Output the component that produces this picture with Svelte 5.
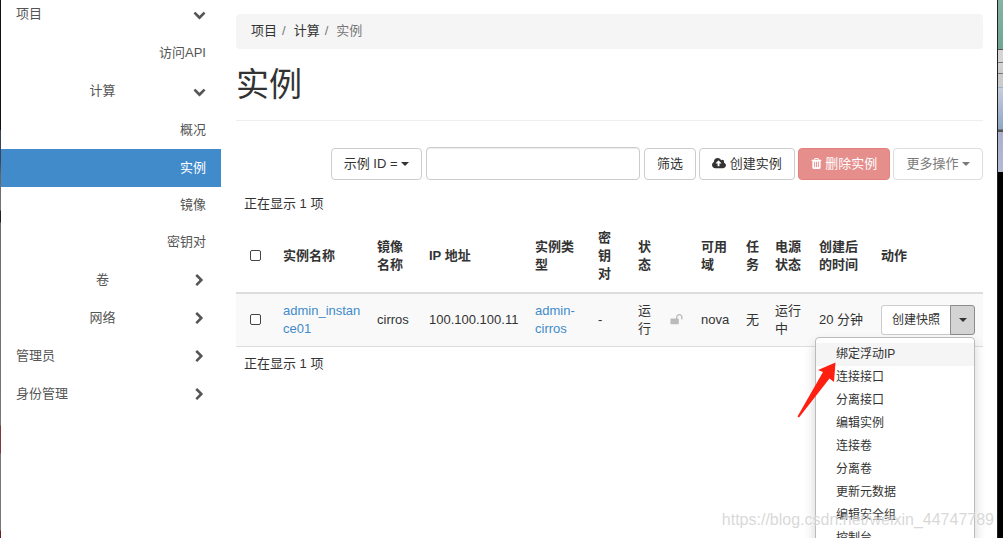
<div class='desktop'>
  <div class='edge left'></div>
  <nav class='sidebar'>
    {#each panels as panel}
      <button type='button' class='heading' on:click={() => { toggle(panel); }}>
        <span>{panel.name}</span>
        <svg class='chevron' viewBox='0 0 1792 1792'><path d={panel.open ? icons.down : icons.right} /></svg>
      </button>
      {#if panel.open}
        {#each panel.groups as group}
          {#if group.name}
            <button type='button' class='heading sub' on:click={() => { toggle(group); }}>
              <span>{group.name}</span>
              <svg class='chevron' viewBox='0 0 1792 1792'><path d={group.open ? icons.down : icons.right} /></svg>
            </button>
          {/if}
          {#if group.open}
            <ul>
              {#each group.items as item}
                <li><a href='#top' class:active={item === current}>{item}</a></li>
              {/each}
            </ul>
          {/if}
        {/each}
      {/if}
    {/each}
  </nav>

  <main>
    <ol class='breadcrumb'>
      <li><a href='#top'>项目</a></li>
      <li><a href='#top'>计算</a></li>
      <li class='here'>实例</li>
    </ol>
    <h1>实例</h1>

    <div class='toolbar'>
      <div class='filter'>
        <button type='button' class='btn'>示例 ID = <span class='caret'></span></button>
        <input type='text' aria-label='筛选' bind:value={filter} />
        <button type='button' class='btn'>筛选</button>
      </div>
      <div class='actions'>
        <button type='button' class='btn'>
          <svg class='icon wide' viewBox='0 0 1920 1792'><path d={icons.upload} /></svg>
          创建实例
        </button>
        <button type='button' class='btn danger' disabled>
          <svg class='icon trash' viewBox='0 0 1536 1792'><path d={icons.trash} transform='translate(-128 0)' /></svg>
          删除实例
        </button>
        <button type='button' class='btn' disabled>更多操作 <span class='caret'></span></button>
      </div>
    </div>

    <p class='count'>正在显示 1 项</p>
    <table>
      <colgroup>
        {#each columns as col}
          <col style:width={col.width ? col.width + 'px' : 'auto'} />
        {/each}
      </colgroup>
      <thead>
        <tr>
          <th class='check'><input type='checkbox' aria-label='全选' /></th>
          {#each columns.slice(1) as col}
            <th>{col.name}</th>
          {/each}
        </tr>
      </thead>
      <tbody>
        <tr>
          <td class='check'><input type='checkbox' aria-label='admin_instance01' /></td>
          <td class='name'><a href='#top'>admin_instance01</a></td>
          <td>cirros</td>
          <td>100.100.100.11</td>
          <td><a href='#top'>admin-cirros</a></td>
          <td>-</td>
          <td>运行</td>
          <td><svg class='icon lock' viewBox='0 0 1792 1792'><path d={icons.unlock} /></svg></td>
          <td>nova</td>
          <td>无</td>
          <td>运行中</td>
          <td>20 分钟</td>
          <td>
            <div class='split'>
              <button type='button' class='btn small'>创建快照</button>
              <button
                type='button'
                class='btn small toggle'
                class:open={menuOpen}
                aria-label='动作'
                on:click={() => { menuOpen = !menuOpen; }}
              ><span class='caret'></span></button>
              {#if menuOpen}
                <ul class='menu'>
                  {#each menu as item, i}
                    <li><a href='#top' class:hover={i === 0}>{item}</a></li>
                  {/each}
                </ul>
                <svg class='pointer' viewBox='0 0 40 56'>
                  <path d='M38.5 0.5 L21 8 L26 10 L0.5 54.5 L2 55.5 L32.5 16.5 L37 20 Z' />
                </svg>
              {/if}
            </div>
          </td>
        </tr>
      </tbody>
    </table>
    <p class='count'>正在显示 1 项</p>
  </main>
  <div class='edge right'></div>
  <div class='watermark'>https://blog.csdn.net/weixin_44747789</div>
</div>

<style>
  :global(body) {
    margin: 0px;
    background: #fff;
  }

  .desktop {
    position: relative;
    display: flex;
    height: 100vh;
    overflow: hidden;
    color: #333;
    font-family: "Liberation Sans", "Noto Sans CJK SC", sans-serif;
    font-size: 13px;
    line-height: 18px;
  }

  button, input {
    font: inherit;
    color: inherit;
    box-sizing: border-box;
  }

  button {
    cursor: pointer;
  }

  a {
    color: #428bca;
    text-decoration: none;
  }

  ul, ol {
    list-style: none;
    margin: 0px;
    padding: 0px;
  }

  .edge {
    flex: none;
  }

  .edge.left {
    width: 1px;
    background: linear-gradient(#111 130px, #3a4358 130px, #3a4358 160px, #666 175px, #777 210px, #222 211px, #222 222px, #6b6b6b 223px, #777 425px, #7a3a40 426px, #7a3a40 453px, #777 454px, #777 530px, #702020 531px);
  }

  .edge.right {
    width: 6px;
    box-sizing: border-box;
    border-left: 1px solid #222;
    background: linear-gradient(#86b3a5, #6fa593 49px, #555 49px, #555 50px, #d5d5d5 50px, #d5d5d5 62px, #777 62px, #777 63px, #d5d5d5 63px, #ccc 73px, #777 73px, #777 74px, #ccc 74px, #ccc 87px, #6e9dc0 87px, #c5cede 88px, #8fa6c4 129px, #555 130px, #555 132px, #abb1cc 132px, #b5b9d2 172px, #000 172px);
  }

  .sidebar {
    flex: none;
    width: 220px;
    margin-top: -4px;
    color: #555;
  }

  .heading {
    display: flex;
    align-items: center;
    width: 100%;
    padding: 9px 15px 11px;
    border: none;
    background: none;
    text-align: left;
  }

  .heading span {
    flex: 1;
  }

  .heading.sub {
    padding-left: 11px;
    text-align: center;
  }

  .chevron {
    width: 13px;
    height: 13px;
    fill: currentColor;
  }

  .icon {
    width: 13px;
    height: 13px;
    fill: currentColor;
    vertical-align: -2px;
  }

  .icon.wide {
    width: 14px;
  }

  .icon.trash {
    width: 11px;
  }

  .icon.lock {
    color: #bbb;
  }

  .sidebar ul {
    padding: 1px 0px;
  }

  .sidebar li a {
    display: block;
    padding: 9px 15px 10px;
    color: #555;
    text-align: right;
  }

  .sidebar li a.active {
    padding: 10px 15px;
    background: #428bca;
    color: #fff;
  }

  main {
    flex: 1;
    min-width: 0px;
    padding: 14px 14px 0px 15px;
  }

  .breadcrumb {
    display: flex;
    padding: 8px 15px 9px;
    border-radius: 4px;
    background: #f5f5f5;
  }

  .breadcrumb a {
    color: #333;
  }

  .breadcrumb li + li::before {
    content: '/';
    padding: 0px 8px 0px 5px;
    color: #777;
  }

  .breadcrumb .here {
    color: #777;
  }

  h1 {
    margin: 18px 0px 26px;
    padding-bottom: 17px;
    border-bottom: 1px solid #eee;
    font-size: 33px;
    font-weight: normal;
    line-height: 36px;
  }

  .toolbar {
    display: flex;
    justify-content: flex-end;
    align-items: flex-end;
    gap: 3px;
    margin-bottom: 7px;
  }

  .filter {
    display: flex;
    align-items: flex-end;
    gap: 4px;
  }

  .filter input {
    width: 214px;
    height: 33px;
    padding: 6px 12px;
    border: 1px solid #ccc;
    border-radius: 4px;
    box-shadow: inset 0 1px 1px rgba(0, 0, 0, 0.08);
  }

  .actions {
    display: flex;
    gap: 3px;
  }

  .btn {
    padding: 6px 12px;
    border: 1px solid #ccc;
    border-radius: 4px;
    background: #fff;
    white-space: nowrap;
  }

  .btn:disabled {
    opacity: 0.65;
    cursor: default;
  }

  .btn.danger {
    border-color: #d43f3a;
    background: #d9534f;
    color: #fff;
  }

  .caret {
    display: inline-block;
    border-top: 4px solid;
    border-left: 4px solid transparent;
    border-right: 4px solid transparent;
    vertical-align: 2px;
  }

  .count {
    margin: 0px;
    padding: 8px;
  }

  table {
    width: 100%;
    table-layout: fixed;
    border-collapse: separate;
    border-spacing: 0px;
  }

  th, td {
    padding: 8px;
    text-align: left;
    vertical-align: middle;
  }

  th {
    padding-bottom: 9px;
    border-bottom: 2px solid #ddd;
  }

  td {
    border-bottom: 1px solid #ddd;
    background: #f9f9f9;
  }

  .check {
    text-align: center;
  }

  .check input {
    appearance: none;
    width: 11px;
    height: 11px;
    margin: 0px;
    border: 1px solid #444;
    border-radius: 2px;
    background: #fff;
    vertical-align: -1px;
  }

  .name {
    word-break: break-all;
  }

  .split {
    position: relative;
    display: flex;
    width: max-content;
  }

  .btn.small {
    padding: 5px 10px;
    border-radius: 3px 0px 0px 3px;
    font-size: 12px;
  }

  .btn.toggle {
    padding: 5px 7px 5px 8px;
    margin-left: -1px;
    border-radius: 0px 3px 3px 0px;
    line-height: 12px;
  }

  .btn.toggle.open {
    border-color: #8c8c8c;
    background: #d4d4d4;
  }

  .menu {
    position: absolute;
    top: 100%;
    right: 0px;
    width: 158px;
    margin-top: 2px;
    padding: 5px 0px;
    border: 1px solid #bbb;
    border-radius: 4px;
    background: #fff;
    box-shadow: 0px 6px 12px rgba(0, 0, 0, 0.18);
    font-size: 12px;
    line-height: 17px;
  }

  .menu a {
    display: block;
    padding: 3px 20px;
    color: #333;
  }

  .menu a.hover {
    background: #f5f5f5;
  }

  .pointer {
    position: absolute;
    top: 57px;
    right: 138px;
    width: 40px;
    height: 56px;
    fill: #ff1f10;
    pointer-events: none;
  }

  .watermark {
    position: absolute;
    right: 9px;
    bottom: 9px;
    color: rgba(190, 190, 190, 0.6);
    font-size: 16px;
    text-shadow: 0px 0px 2px #fff;
    pointer-events: none;
  }
</style>

<script>
  let current = '实例';
  let filter = '';
  let menuOpen = true;

  const icons = {
    down: 'M1683 808l-742 741q-19 19-45 19t-45-19l-742-741q-19-19-19-45.5t19-45.5l166-165q19-19 45-19t45 19l531 531 531-531q19-19 45-19t45 19l166 165q19 19 19 45.5t-19 45.5z',
    right: 'M1363 877l-742 742q-19 19-45 19t-45-19l-166-166q-19-19-19-45t19-45l531-531-531-531q-19-19-19-45t19-45l166-166q19-19 45-19t45 19l742 742q19 19 19 45t-19 45z',
    upload: 'M1280 864q0-14-9-23l-352-352q-9-9-23-9t-23 9l-351 351q-10 12-10 24 0 14 9 23t23 9h224v352q0 13 9.5 22.5t22.5 9.5h192q13 0 22.5-9.5t9.5-22.5v-352h224q13 0 22.5-9.5t9.5-22.5zm640 288q0 159-112.5 271.5t-271.5 112.5h-1088q-185 0-316.5-131.5t-131.5-316.5q0-130 70-240t188-165q-2-30-2-43 0-212 150-362t362-150q156 0 285.5 87t188.5 231q71-62 166-62 106 0 181 75t75 181q0 76-41 138 130 31 213.5 135.5t83.5 238.5z',
    trash: 'M704 1376v-704q0-14-9-23t-23-9h-64q-14 0-23 9t-9 23v704q0 14 9 23t23 9h64q14 0 23-9t9-23zm256 0v-704q0-14-9-23t-23-9h-64q-14 0-23 9t-9 23v704q0 14 9 23t23 9h64q14 0 23-9t9-23zm256 0v-704q0-14-9-23t-23-9h-64q-14 0-23 9t-9 23v704q0 14 9 23t23 9h64q14 0 23-9t9-23zm-544-992h448l-48-117q-7-9-17-11h-317q-10 2-17 11zm928 32v64q0 14-9 23t-23 9h-96v948q0 83-47 143.5t-113 60.5h-832q-66 0-113-58.5t-47-141.5v-952h-96q-14 0-23-9t-9-23v-64q0-14 9-23t23-9h309l70-167q15-37 54-63t79-26h320q40 0 79 26t54 63l70 167h309q14 0 23 9t9 23z',
    unlock: 'M1728 576v256q0 26-19 45t-45 19h-64q-26 0-45-19t-19-45v-256q0-106-75-181t-181-75-181 75-75 181v192h96q40 0 68 28t28 68v576q0 40-28 68t-68 28h-960q-40 0-68-28t-28-68v-576q0-40 28-68t68-28h672v-192q0-185 131.5-316.5t316.5-131.5 316.5 131.5 131.5 316.5z'
  };

  let panels = [
    {
      name: '项目',
      open: true,
      groups: [
        { open: true, items: ['访问API'] },
        { name: '计算', open: true, items: ['概况', '实例', '镜像', '密钥对'] },
        { name: '卷', open: false, items: [] },
        { name: '网络', open: false, items: [] }
      ]
    },
    { name: '管理员', open: false, groups: [] },
    { name: '身份管理', open: false, groups: [] }
  ];

  //
  // The instance name column takes whatever width is left.
  //
  const columns = [
    { name: '', width: 39 },
    { name: '实例名称' },
    { name: '镜像名称', width: 52 },
    { name: 'IP 地址', width: 106 },
    { name: '实例类型', width: 63 },
    { name: '密钥对', width: 40 },
    { name: '状态', width: 32 },
    { name: '', width: 31 },
    { name: '可用域', width: 45 },
    { name: '任务', width: 29 },
    { name: '电源状态', width: 44 },
    { name: '创建后的时间', width: 62 },
    { name: '动作', width: 110 }
  ];

  const menu = ['绑定浮动IP', '连接接口', '分离接口', '编辑实例', '连接卷', '分离卷', '更新元数据', '编辑安全组', '控制台'];

  function toggle(entry) {
    entry.open = !entry.open;
    panels = panels;
  }
</script>
